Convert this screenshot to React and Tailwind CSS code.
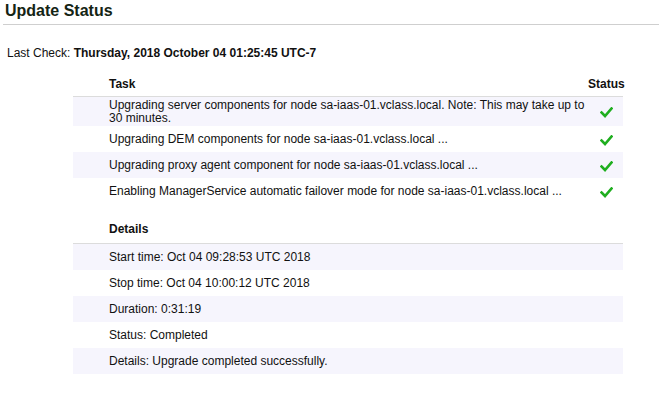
const tasks = [
  ["Upgrading server components for node sa-iaas-01.vclass.local. Note: This may take up to", "30 minutes."],
  ["Upgrading DEM components for node sa-iaas-01.vclass.local ..."],
  ["Upgrading proxy agent component for node sa-iaas-01.vclass.local ..."],
  ["Enabling ManagerService automatic failover mode for node sa-iaas-01.vclass.local ..."],
];

const details = [
  "Start time: Oct 04 09:28:53 UTC 2018",
  "Stop time: Oct 04 10:00:12 UTC 2018",
  "Duration: 0:31:19",
  "Status: Completed",
  "Details: Upgrade completed successfully.",
];

function Check() {
  return (
    <svg width="13" height="11" viewBox="0 0 13 11">
      <path d="M1.5 5.5 L5 9 L11.5 1.5" fill="none" stroke="#1fae1f" strokeWidth="2.6" strokeLinecap="square" />
    </svg>
  );
}

export default function App() {
  return (
    <div className="w-[659px] h-[394px] bg-white text-[12px] leading-[13px] text-[#111] font-['Liberation_Sans',Arial,sans-serif]">
      <div className="ml-[3px] pl-[2px] pt-[2px] h-[25px] border-b border-[#cfcfcf]">
        <h1 className="text-[16px] leading-[18px] font-bold text-[#142414]">Update Status</h1>
      </div>

      <div className="pl-[7px] pt-[22px] h-[45px]">
        Last Check: <span className="font-bold">Thursday, 2018 October 04 01:25:45 UTC-7</span>
      </div>

      <div className="ml-[73px] w-[550px]">
        <div className="flex items-end h-[27px] pb-[5px] border-b border-[#dcdcdc] font-bold">
          <div className="flex-1 pl-[36px]">Task</div>
          <div className="w-[35px]">Status</div>
        </div>
        {tasks.map((t, i) => (
          <div key={i} className={`flex items-center ${t.length > 1 ? "h-[29px]" : "h-[26px]"} ${i % 2 === 0 ? "bg-[#f6f5fd]" : "bg-white"}`}>
            <div className="flex-1 pl-[36px] whitespace-nowrap">
              {t.map((line, j) => (
                <div key={j}>{line}</div>
              ))}
            </div>
            <div className="w-[35px] flex justify-center pl-[1px] pt-[2px]">
              <Check />
            </div>
          </div>
        ))}

        <div className="h-[40px] flex items-end pb-[7px] pl-[36px] border-b border-[#dcdcdc] font-bold">Details</div>
        {details.map((d, i) => (
          <div key={i} className={`h-[26px] flex items-center pl-[36px] ${i % 2 === 0 ? "bg-[#f6f5fd]" : "bg-white"}`}>
            {d}
          </div>
        ))}
      </div>
    </div>
  );
}
